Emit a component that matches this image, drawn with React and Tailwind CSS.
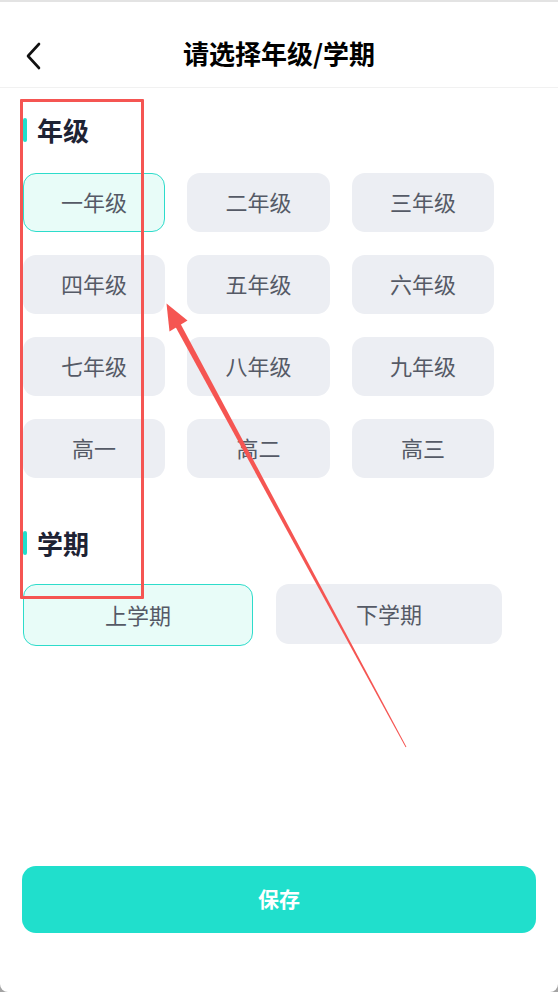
import React from "react";

const grades = [
  "一年级", "二年级", "三年级",
  "四年级", "五年级", "六年级",
  "七年级", "八年级", "九年级",
  "高一", "高二", "高三",
];

function SectionTitle({ children }) {
  return (
    <div className="flex items-center h-[30px]">
      <div className="w-[4px] h-[24px] rounded-full bg-[#20dfcc]" />
      <div className="ml-[10px] text-[26px] font-bold text-[#1e2334] leading-none">{children}</div>
    </div>
  );
}

export default function App() {
  const font = { fontFamily: '"Noto Sans CJK SC", "Noto Sans", sans-serif' };
  return (
    <div className="w-[558px] h-[992px] bg-[#a3a3a3] overflow-hidden" style={font}>
      <div className="relative w-full h-full bg-white rounded-b-[8px] flex flex-col">
        <div className="h-[2px] bg-[#e3e3e3]" />
        <div className="relative h-[86px] flex items-center justify-center pt-[16px] border-b border-[#f1f1f1]">
          <svg className="absolute left-[24px] top-[39px]" width="20" height="30" viewBox="0 0 20 30" fill="none">
            <path d="M15 3 L4 15 L15 27" stroke="#111" strokeWidth="2.6" strokeLinecap="round" strokeLinejoin="round" />
          </svg>
          <div className="text-[26px] font-bold text-black leading-none">请选择年级/学期</div>
        </div>

        <div className="px-[23px] pt-[27px]">
          <SectionTitle>年级</SectionTitle>
          <div className="mt-[28px] grid grid-cols-[142px_143px_142px] gap-x-[22px] gap-y-[23px]">
            {grades.map((g, i) => (
              <div
                key={g}
                className={
                  i === 0
                    ? "h-[59px] pb-[3px] rounded-[13px] border border-[#2ddccb] bg-[#e8fcf8] flex items-center justify-center text-[22px] leading-none text-[#555a66]"
                    : "h-[59px] pb-[3px] rounded-[13px] bg-[#eceef3] flex items-center justify-center text-[22px] leading-none text-[#555a66]"
                }
              >
                {g}
              </div>
            ))}
          </div>

          <div className="mt-[50px]">
            <SectionTitle>学期</SectionTitle>
          </div>
          <div className="mt-[26px] flex gap-[23px]">
            <div className="w-[230px] h-[62px] pb-[3px] rounded-[13px] border border-[#2ddccb] bg-[#e8fcf8] flex items-center justify-center text-[22px] leading-none text-[#555a66]">
              上学期
            </div>
            <div className="w-[226px] h-[60px] pb-[3px] rounded-[13px] bg-[#eceef3] flex items-center justify-center text-[22px] leading-none text-[#555a66]">
              下学期
            </div>
          </div>
        </div>

        <div className="flex-1" />
        <div className="px-[22px] pb-[59px]">
          <div className="h-[67px] pb-[3px] rounded-[14px] bg-[#20dfcc] flex items-center justify-center text-[21px] leading-none font-bold text-white">
            保存
          </div>
        </div>

        <div className="absolute left-[20px] top-[99px] w-[124px] h-[500px] border-[3px] border-[#f55552] rounded-[1px] pointer-events-none" />
        <svg className="absolute left-0 top-0 pointer-events-none" width="558" height="992" viewBox="0 0 558 992">
          <polygon points="174.9,325.7 180.1,322.9 406.4,746.8 405.6,747.2" fill="#f55552" />
          <polygon points="166.5,303.5 187.5,320.5 169.5,331.5" fill="#f55552" />
        </svg>
      </div>
    </div>
  );
}
